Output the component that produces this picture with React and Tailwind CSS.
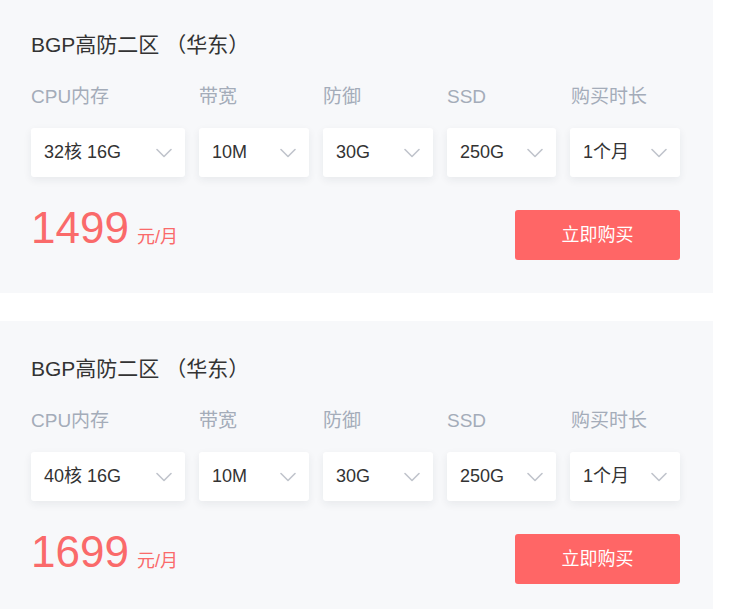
import React from 'react';

const Chevron = () => (
    <svg width="16" height="10" viewBox="0 0 16 10" fill="none">
        <polyline points="1,1.5 8,8.5 15,1.5" stroke="#c0c4cc" strokeWidth="1.6" strokeLinejoin="round" strokeLinecap="round" />
    </svg>
);

const Select = ({ value }) => (
    <div className="h-[49px] bg-white rounded-[3px] shadow-[0_3px_8px_rgba(30,40,60,0.07)] flex items-center justify-between pl-[13px] pr-[13px] text-[18px] text-[#333]">
        <span>{value}</span>
        <Chevron />
    </div>
);

const labels = ['CPU内存', '带宽', '防御', 'SSD', '购买时长'];

const PlanCard = ({ cpu, price, className = '' }) => {
    const values = [cpu, '10M', '30G', '250G', '1个月'];

    return (
        <div className={`w-[713px] bg-[#f7f8fa] pt-[34px] pb-[33px] pl-[31px] pr-[33px] ${className}`}>
            <h3 className="text-[21px] leading-[28px] text-[#333]">BGP高防二区 （华东）</h3>

            <div className="grid grid-cols-[154px_110px_110px_110px_110px] gap-x-[14px] mt-[26px]">
                {labels.map((label) => (
                    <div key={label} className="text-[19px] leading-[24px] text-[#a4acb9]">{label}</div>
                ))}
            </div>

            <div className="grid grid-cols-[154px_110px_110px_109px_110px] gap-x-[14px] mt-[19px]">
                {values.map((v, i) => (
                    <Select key={i} value={v} />
                ))}
            </div>

            <div className="flex items-center justify-between mt-[33px] w-[649px]">
                <div className="flex items-baseline text-[#fa6a6a] -mt-[14px]">
                    <span className="text-[44px] leading-none">{price}</span>
                    <span className="text-[18px] ml-[8px]">元/月</span>
                </div>
                <button className="w-[165px] h-[50px] rounded-[3px] bg-[#ff6666] text-white text-[18px]">立即购买</button>
            </div>
        </div>
    );
};

export default function App() {
    return (
        <div className="bg-white min-h-screen overflow-hidden font-['Liberation_Sans','Noto_Sans_CJK_SC',sans-serif]">
            <PlanCard cpu="32核 16G" price="1499" className="-mt-[3px]" />
            <PlanCard cpu="40核 16G" price="1699" className="mt-[28px]" />
        </div>
    );
}
